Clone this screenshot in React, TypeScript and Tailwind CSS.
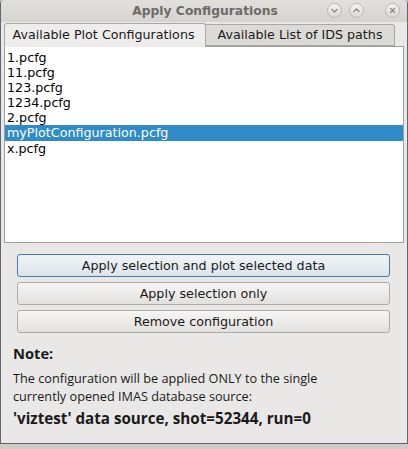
import React from 'react';

const files = ['1.pcfg', '11.pcfg', '123.pcfg', '1234.pcfg', '2.pcfg', 'myPlotConfiguration.pcfg', 'x.pcfg'];
const selected = 'myPlotConfiguration.pcfg';

const TitleButton: React.FC<{ kind: 'down' | 'up' | 'close' }> = ({ kind }) => (
  <div className="w-[15px] h-[15px] rounded-full border border-[#b9b6b2] bg-gradient-to-b from-[#f4f3f2] to-[#dcd9d5] flex items-center justify-center">
    <svg width="9" height="9" viewBox="0 0 9 9" fill="none" stroke="#8a8784" strokeWidth="1.3" strokeLinecap="round">
      {kind === 'down' && <path d="M2 3.5 L4.5 6 L7 3.5" />}
      {kind === 'up' && <path d="M2 5.5 L4.5 3 L7 5.5" />}
      {kind === 'close' && <path d="M2.5 2.5 L6.5 6.5 M6.5 2.5 L2.5 6.5" />}
    </svg>
  </div>
);

const Button: React.FC<{ label: string; focused?: boolean }> = ({ label, focused }) => (
  <button
    className={`h-[23px] w-full rounded-[3px] border text-[12.7px] text-[#1a1a1a] flex items-center justify-center ${
      focused
        ? 'border-[#3f7cae] bg-gradient-to-b from-[#f1f4f7] to-[#dde4ea]'
        : 'border-[#aeaca8] bg-gradient-to-b from-[#f7f6f5] to-[#e2e0dd]'
    }`}
  >
    {label}
  </button>
);

export default function App() {
  return (
    <div className="w-[408px] h-[449px] bg-[#cfccc8] flex flex-col font-['DejaVu_Sans',sans-serif]">
      <div className="flex-1 flex flex-col border-l border-r border-b border-[#5d6670] rounded-t-[4px] overflow-hidden">
        {/* title bar */}
        <div className="h-[22px] bg-gradient-to-b from-[#e2e0dd] to-[#d6d3cf] relative flex items-center justify-center">
          <span className="text-[12.3px] font-bold text-[#6c6b69] pl-[2px]">Apply Configurations</span>
          <div className="absolute right-[7px] top-[3px] flex items-center">
            <TitleButton kind="down" />
            <div className="w-[7px]" />
            <TitleButton kind="up" />
            <div className="w-[21px]" />
            <TitleButton kind="close" />
          </div>
        </div>

        {/* body */}
        <div className="flex-1 bg-[#e9e8e6] flex flex-col px-[2px]">
          {/* tabs */}
          <div className="flex items-end h-[24px] pl-[1px]">
            <div className="h-[24px] w-[202px] border border-b-0 border-[#aaa8a4] rounded-t-[3px] bg-[#eeedeb] flex items-center justify-center text-[12.7px] text-[#1a1a1a] relative z-10 -mb-px pb-[1px] pr-[3px]">
              Available Plot Configurations
            </div>
            <div className="h-[22px] w-[189px] border border-l-0 border-[#aaa8a4] rounded-tr-[3px] bg-[#dcdad6] flex items-center justify-center text-[12.7px] text-[#1a1a1a]">
              Available List of IDS paths
            </div>
          </div>

          {/* list */}
          <div className="h-[197px] mx-[1px] border border-[#a3a19e] bg-white pt-[3px]">
            {files.map((f) => (
              <div
                key={f}
                className={`h-[15px] leading-[15px] text-[12.7px] pl-[2px] ${
                  f === selected ? 'bg-[#308cc6] text-white h-[16px] leading-[16px]' : 'text-black'
                }`}
              >
                {f}
              </div>
            ))}
          </div>

          {/* buttons */}
          <div className="flex flex-col gap-[5px] pl-[14px] pr-[15px] mt-[11px]">
            <Button label="Apply selection and plot selected data" focused />
            <Button label="Apply selection only" />
            <Button label="Remove configuration" />
          </div>

          {/* note */}
          <div className="px-[10px] mt-[10px] font-['Open_Sans',sans-serif] text-[#1a1a1a]">
            <div className="text-[14.7px] font-bold leading-[20px]">Note:</div>
            <div className="text-[12.7px] leading-[18px] mt-[6px]">
              The configuration will be applied ONLY to the single
              <br />
              currently opened IMAS database source:
            </div>
            <div className="text-[15.2px] font-bold leading-[20px] mt-[3px]">
              'viztest' data source, shot=52344, run=0
            </div>
          </div>
        </div>
      </div>
      <div className="h-[5px]" />
    </div>
  );
}
